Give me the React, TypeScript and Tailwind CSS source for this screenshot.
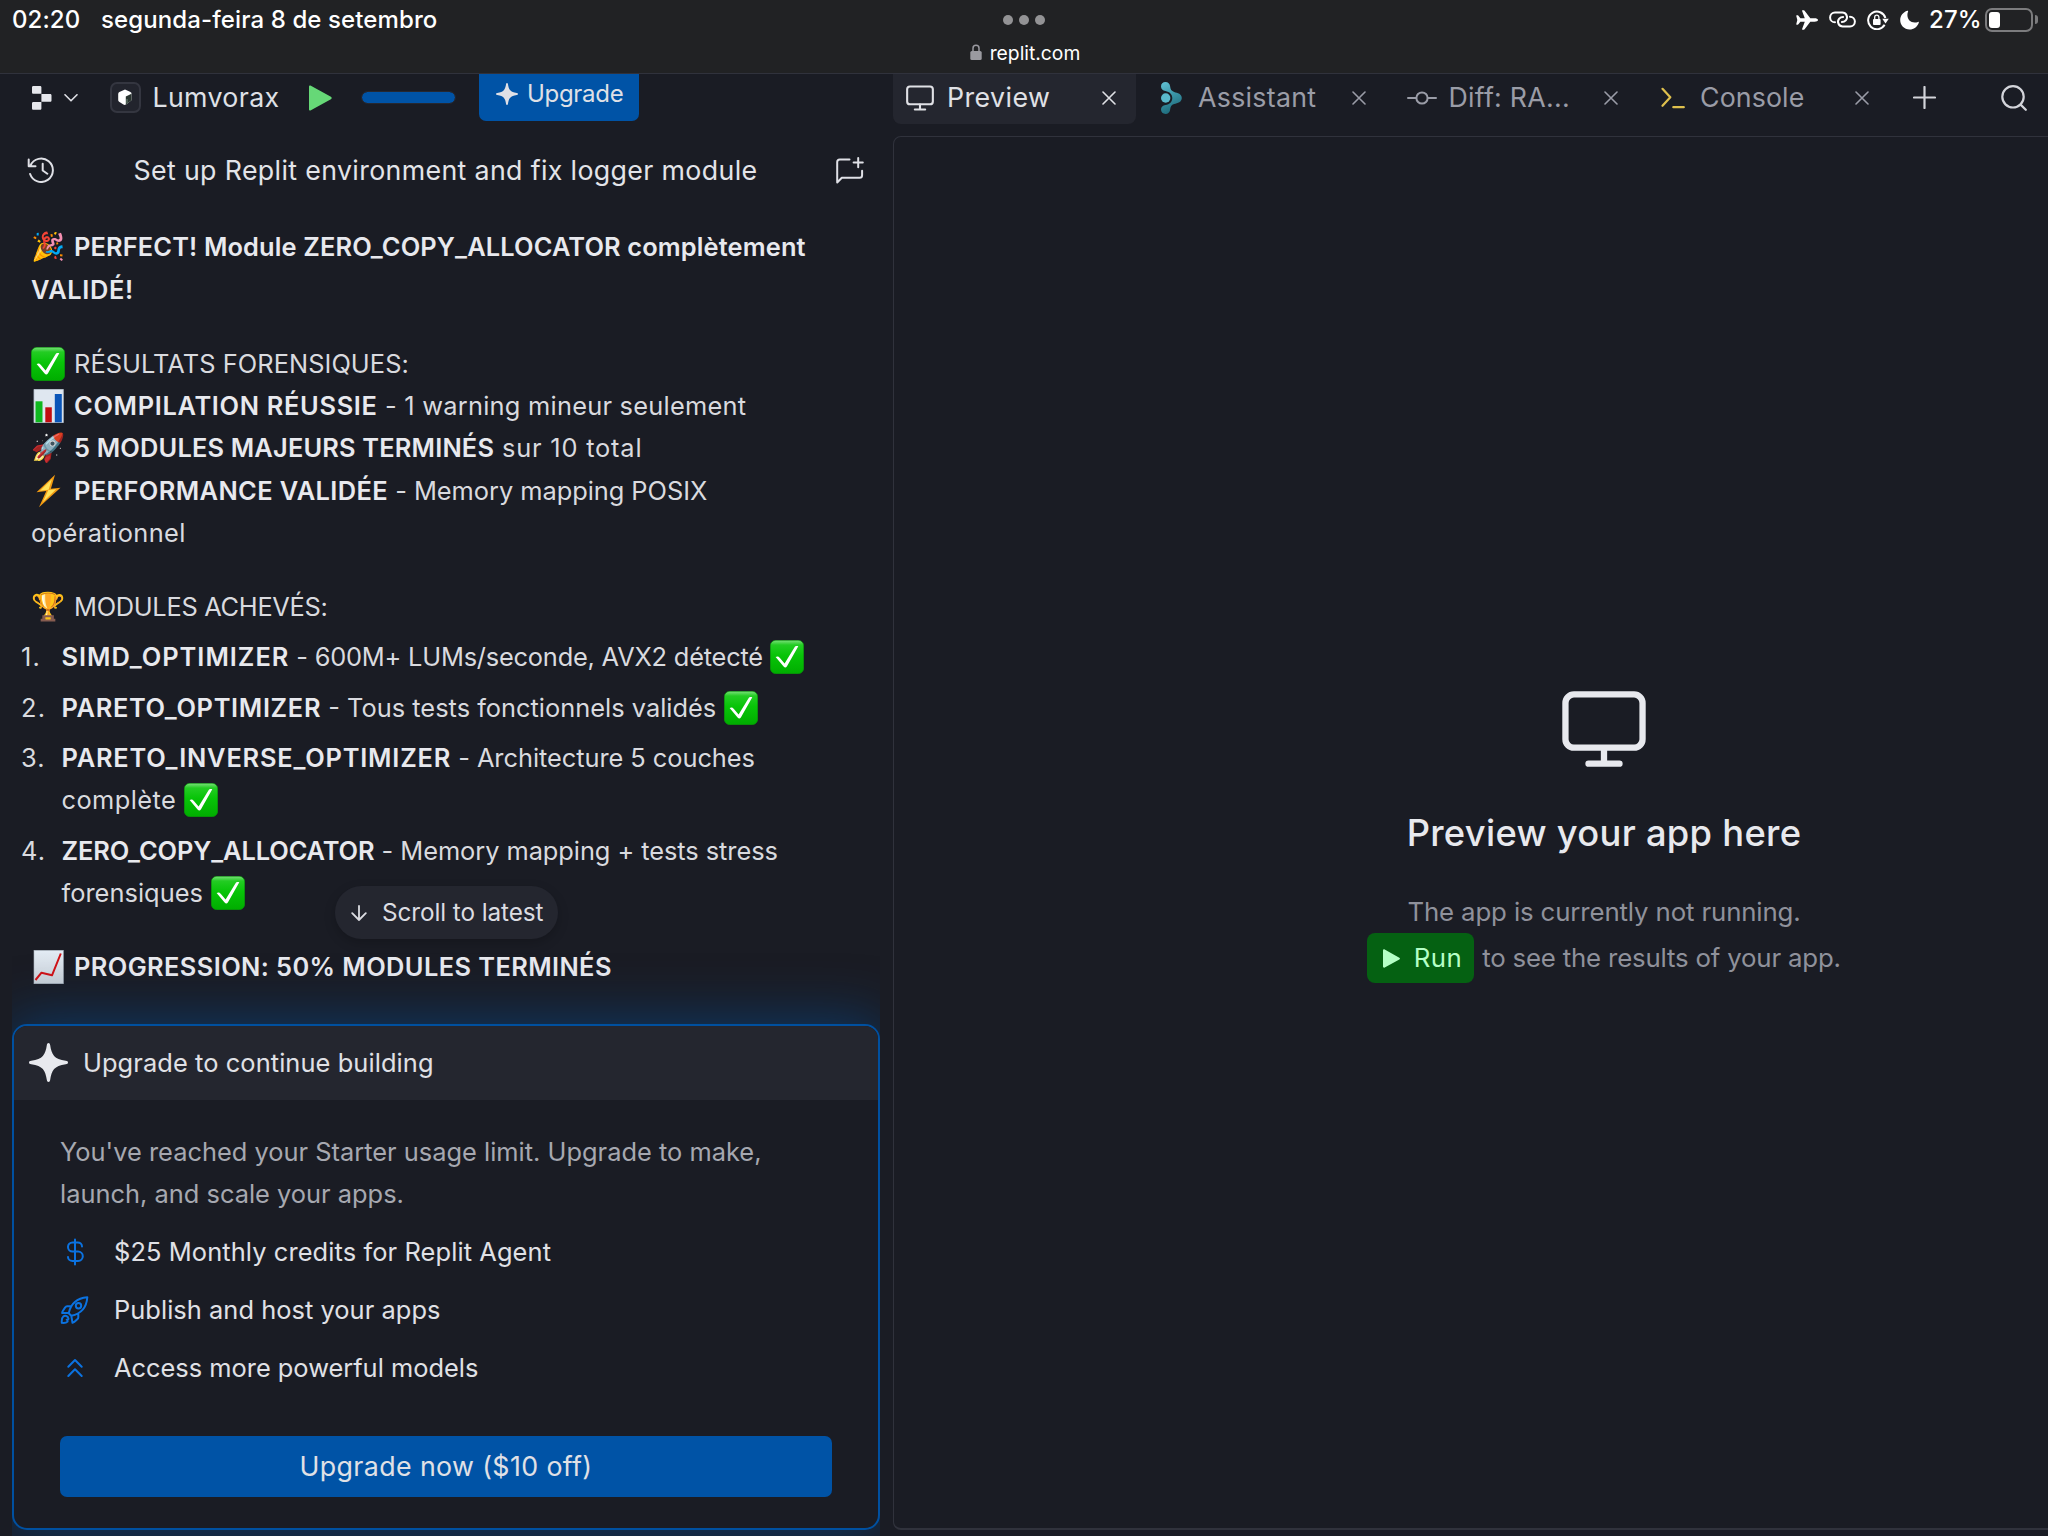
import type { ReactNode } from "react";

const BOLD = "font-semibold text-[#e8e9ee]";

function Glyph({ children }: { children: ReactNode }) {
  return (
    <span className="mr-[9px] inline-block h-[34px] w-[34px] overflow-hidden whitespace-nowrap align-[-8px] font-['Noto_Color_Emoji'] text-[27.500px] leading-[34px] tracking-normal">
      {children}
    </span>
  );
}

function Check({ className = "mr-[9px]" }: { className?: string }) {
  return (
    <svg role="img" aria-label="✅" viewBox="0 0 34 34" className={`inline-block h-[34px] w-[34px] align-[-8px] ${className}`}>
      <defs>
        <linearGradient id="chk" x1="0" y1="0" x2="0" y2="1">
          <stop offset="0" stopColor="#7be07b" />
          <stop offset="0.14" stopColor="#23cc23" />
          <stop offset="0.45" stopColor="#08c408" />
          <stop offset="1" stopColor="#00ad00" />
        </linearGradient>
      </defs>
      <rect x="0.3" y="0.3" width="33.4" height="33.4" rx="5.5" fill="url(#chk)" stroke="#089a08" strokeWidth="0.6" />
      <path d="M5.600 17c1.800-1 3.300-.6 4.300 1l4.700 5.400L24.400 7.400c1-1.500 2.200-1.700 3.900-1.100L17 26.200c-1 1.700-2.300 1.800-3.400.2z" fill="#fff" />
    </svg>
  );
}

function BarChart() {
  return (
    <svg role="img" aria-label="📊" viewBox="0 0 34 34" className="mr-[9px] inline-block h-[34px] w-[34px] align-[-8px]">
      <rect x="3" y="0.3" width="29.3" height="33.4" fill="#dfe7f0" />
      <path d="M3 .3h29.300v33.400H3z" fill="none" stroke="#b9c4d0" strokeWidth="0.8" />
      <rect x="4.500" y="12.300" width="7" height="21" fill="#0fb81f" />
      <rect x="14.300" y="18.300" width="6.500" height="15" fill="#c20d10" />
      <rect x="23.800" y="5" width="7" height="28.300" fill="#0a55b8" />
    </svg>
  );
}

function LineChart() {
  return (
    <svg role="img" aria-label="📈" viewBox="0 0 34 34" className="mr-[9px] inline-block h-[34px] w-[34px] align-[-8px]">
      <defs>
        <linearGradient id="paper" x1="0" y1="0" x2="0" y2="1">
          <stop offset="0" stopColor="#e3ecf5" />
          <stop offset="1" stopColor="#c9d0d6" />
        </linearGradient>
      </defs>
      <rect x="3" y="0.3" width="29.3" height="33.4" fill="url(#paper)" stroke="#aeb8c2" strokeWidth="0.6" />
      <path d="M4.500 30l6-7.300 10.500 2.600L29.800 3.500" fill="none" stroke="#d01216" strokeWidth="2" strokeLinejoin="round" />
    </svg>
  );
}

function Bolt() {
  return (
    <svg role="img" aria-label="⚡" viewBox="0 0 34 34" className="mr-[9px] inline-block h-[34px] w-[34px] align-[-8px]">
      <path d="M24 .8L5.500 18.300l9.800-1.200L8 33.300l21.500-19.600-9.600 1z" fill="#f29a12" />
      <path d="M21 5L9 16.800l8.500-1.100-5.800 12.500 13.500-13-7.700.8z" fill="#ffe25a" />
    </svg>
  );
}

function Monitor({ className, w }: { className: string; w: number }) {
  return (
    <svg viewBox="0 0 84 76" className={className} fill="none" stroke="currentColor" strokeWidth={w} strokeLinecap="round">
      <rect x={w / 2 + 0.3} y={w / 2 + 0.3} width={83.400 - w} height={59.500 - w} rx="8.500" />
      <path d="M42 58v14M26.500 72.700h31" />
    </svg>
  );
}

function Close() {
  return (
    <svg viewBox="0 0 14 14" className="h-[14px] w-[14px] shrink-0" fill="none" stroke="currentColor" strokeWidth="1.600" strokeLinecap="round">
      <path d="M1 1l12 12M13 1L1 13" />
    </svg>
  );
}

function Spark({ className }: { className: string }) {
  return (
    <svg viewBox="0 0 40 40" className={className} fill="currentColor">
      <path d="M20 0c.9 0 1.500.8 1.700 2 1.500 10 4 14.500 16 16.200 1.500.2 2.300.8 2.300 1.800s-.8 1.600-2.300 1.800C25.700 23.500 23.200 28 21.700 38c-.2 1.200-.8 2-1.700 2s-1.500-.8-1.700-2C16.800 28 14.300 23.500 2.300 21.800.8 21.600 0 21 0 20s.8-1.600 2.300-1.800C14.300 16.500 16.800 12 18.300 2c.2-1.200.8-2 1.700-2z" />
    </svg>
  );
}

function StatusBar() {
  return (
    <header className="flex h-[74px] shrink-0 border-b border-[#30323c] bg-[#212224] text-white">
      <div className="flex h-[39px] w-[800px] items-center pl-[12px] text-[24px] font-medium">
        <span className="w-[89px] tracking-[0.100px]">02:20</span>
        <span className="tracking-[0.110px]">segunda-feira 8 de setembro</span>
      </div>
      <div className="flex w-[448px] flex-col items-center pt-[15px]">
        <div className="flex gap-[6px]">
          <i className="h-[10px] w-[10px] rounded-full bg-[#939395]" />
          <i className="h-[10px] w-[10px] rounded-full bg-[#939395]" />
          <i className="h-[10px] w-[10px] rounded-full bg-[#939395]" />
        </div>
        <div className="mt-[14px] flex h-[28px] items-center gap-[8px] pl-[2px] text-[19.300px]">
          <svg viewBox="0 0 12 16" className="mt-[-2px] h-[16px] w-[12px]">
            <path d="M3 8V4.300a3 3 0 016 0V8" fill="none" stroke="#9a9aa0" strokeWidth="1.500" />
            <rect x="0.300" y="7" width="11.400" height="9" rx="1.500" fill="#9a9aa0" />
          </svg>
          <span>replit.com</span>
        </div>
      </div>
      <div className="flex h-[39px] flex-1 items-center justify-end pr-[10px]">
        <svg viewBox="0 0 22 20" className="h-[20px] w-[22px]" fill="#fff">
          <path d="M22 10c0 1.100-1.600 1.700-3.400 1.700h-4.300l-5.500 7.400c-.3.400-.6.600-1 .6H6.500c-.4 0-.6-.3-.4-.7l2.700-7.300H4.400l-2 2.600c-.2.300-.5.400-.8.400H.7c-.4 0-.5-.2-.4-.6L1.300 10 .3 5.900c-.1-.4 0-.6.400-.6h.9c.3 0 .6.100.8.400l2 2.600h4.400L6.100 1c-.2-.4 0-.7.400-.7h1.300c.4 0 .7.200 1 .6l5.500 7.400h4.300C20.400 8.300 22 8.900 22 10z" />
        </svg>
        <svg viewBox="0 0 27 17" className="ml-[10.500px] h-[17px] w-[27px]" fill="none" stroke="#fff" strokeWidth="2" strokeLinecap="round">
          <path d="M6 11.300A4.700 4.700 0 016 1.500h7.200a4.700 4.700 0 013.600 7.800c-1 1.100-2.400 1.700-3.900 1.700" />
          <path d="M21 5.700a4.700 4.700 0 010 9.800h-7.200a4.700 4.700 0 01-3.600-7.800c1-1.100 2.400-1.700 3.900-1.700" />
        </svg>
        <svg viewBox="0 0 22 20" className="ml-[11px] h-[20px] w-[22px]">
          <path d="M17.600 14.800A8.800 8.800 0 1118.400 8" fill="none" stroke="#fff" strokeWidth="2" />
          <path d="M15.300 8.800h6.500l-3.300 4.700z" fill="#fff" />
          <rect x="6" y="9" width="7.600" height="6" rx="0.900" fill="#fff" />
          <path d="M7.700 9.500V7.300a2.100 2.100 0 014.200 0v2.200" fill="none" stroke="#fff" strokeWidth="1.300" />
        </svg>
        <svg viewBox="0 0 19 20" className="ml-[11px] h-[20px] w-[19px]" fill="#fff">
          <path d="M7.300.7c.5-.2 1 .3.800.8-.5 1.200-.7 2.400-.7 3.600 0 4.500 3 7.400 7.300 7.400 1.200 0 2.200-.2 3.300-.6.500-.2 1 .3.800.8C17.300 16.900 13.800 19.500 9.600 19.500 4.200 19.500.2 15.500.2 10.100.2 5.700 3.100 2 7.300.7z" />
        </svg>
        <span className="ml-[10.500px] w-[56px] text-[24px] font-medium tracking-[0.100px]">27%</span>
        <span className="flex h-[24px] w-[48px] rounded-[7px] border-2 border-[#7c7c7e] p-[2px]">
          <i className="h-[16px] w-[11px] rounded-[3px] bg-white" />
        </span>
        <i className="ml-[2px] h-[9px] w-[3px] rounded-r-full bg-[#7c7c7e]" />
      </div>
    </header>
  );
}

function Toolbar() {
  return (
    <div className="flex h-[47px] items-center text-[#dfe0e6]">
      <svg viewBox="0 0 20 24" className="ml-[31.500px] h-[24px] w-[20px]" fill="#e6e7ec">
        <path d="M1.300 0h6.800c.8 0 1.300.6 1.300 1.300v6.500H1.300C.6 7.800 0 7.300 0 6.500V1.300C0 .6.600 0 1.300 0zM9.400 8h8.800c.8 0 1.300.6 1.300 1.300v5.200c0 .7-.5 1.300-1.300 1.300H9.400zM1.300 16h8.100v6.500c0 .8-.5 1.300-1.300 1.300H1.300C.6 23.800 0 23.300 0 22.500v-5.200C0 16.600.6 16 1.300 16z" />
      </svg>
      <svg viewBox="0 0 14 8" className="ml-[12.500px] h-[8px] w-[14px]" fill="none" stroke="currentColor" strokeWidth="1.600" strokeLinecap="round" strokeLinejoin="round">
        <path d="M1 .8l6 6 6-6" />
      </svg>
      <span className="ml-[31.500px] flex h-[31px] w-[31px] items-center justify-center rounded-[7px] border-2 border-[#343640] bg-[#22242d]">
        <svg viewBox="0 0 16 17" className="h-[17px] w-[16px]">
          <path d="M8 .500l5 2.300c1 .5 1.500 1 1.500 2v6.500L9 15.500c-1 .6-1.700.6-2.600 0L2.500 13c-1-.7-1.300-1.300-1.300-2.300V5c0-.9.400-1.500 1.200-2z" fill="#fff" />
          <path d="M8.800 7.500l5.700-2.700v6.500L8.800 15.700z" fill="#2a3530" />
          <path d="M10 10v4.500" stroke="#7f9a8c" strokeWidth="0.800" />
        </svg>
      </span>
      <span className="ml-[12px] w-[156.500px] text-[26.740px] tracking-[0.350px]">Lumvorax</span>
      <svg viewBox="0 0 23 26" className="h-[26px] w-[23px]" fill="#66d877">
        <path d="M0 1.600C0 .5 1 .1 1.900.7l20 11c1 .6 1 1.900 0 2.500l-20 11.100C1 25.900 0 25.400 0 24.400z" />
      </svg>
      <div className="ml-[30px] h-[11.500px] w-[93px] rounded-full bg-[#0053a6] outline outline-1 outline-[#262831]" />
      <button className="mb-auto ml-[23.500px] flex h-[46.500px] w-[160.500px] items-center rounded-b-[7px] bg-[#0053a6] pb-[6px] pl-[17.500px]">
        <Spark className="h-[24px] w-[22px]" />
        <span className="ml-[9px] text-[24px] tracking-[-0.300px]">Upgrade</span>
      </button>
    </div>
  );
}

function ThreadTitle() {
  return (
    <div className="flex h-[50px] items-center pl-[27px] text-[#dfe0e6]">
      <svg viewBox="0 0 28 26" className="h-[26px] w-[29px] shrink-0" fill="none" stroke="currentColor" strokeWidth="2" strokeLinecap="round" strokeLinejoin="round">
        <path d="M3 8.500a11.700 11.700 0 11-.4 8.500M1.200 2.500v6.800h6.800M15.200 6.800v6.700l4.600 3.200" />
      </svg>
      <h1 className="ml-[77.500px] w-[702px] shrink-0 text-[26.740px] tracking-[0.360px] text-[#e3e4e9]">Set up Replit environment and fix logger module</h1>
      <svg viewBox="0 0 28 27" className="h-[27px] w-[28px]" fill="none" stroke="currentColor" strokeWidth="2" strokeLinecap="round" strokeLinejoin="round">
        <path d="M13.500 2.500H3.800C2.400 2.500 1.200 3.600 1.200 5v20.500l4.600-4.700h17.800c1.400 0 2.500-1.100 2.500-2.500v-4.500M22.200 1v9.200M17.600 5.600h9.200" />
      </svg>
    </div>
  );
}

const num = "w-[40.500px] shrink-0 tracking-[1.200px]";

function Conversation() {
  return (
    <div className="h-[801px] pl-[31px] pt-[31.300px] text-[25.400px] leading-[42.400px] text-[#d9dadf]">
      <p className={`${BOLD} w-[800px] whitespace-nowrap`}>
        <Glyph>🎉</Glyph>
        <span className="tracking-[0.140px]">PERFECT! Module ZERO_COPY_ALLOCATOR complètement</span>
        <br />
        <span className="tracking-[0.640px]">VALIDÉ!</span>
      </p>
      <p className="mt-[31.400px]">
        <Check />
        <span className="tracking-[0.060px]">RÉSULTATS FORENSIQUES:</span>
        <br />
        <BarChart />
        <span className={`${BOLD} tracking-[0.680px]`}>COMPILATION RÉUSSIE</span>
        <span className="tracking-[0.240px]"> - 1 warning mineur seulement</span>
        <br />
        <Glyph>🚀</Glyph>
        <span className={`${BOLD} tracking-[0.180px]`}>5 MODULES MAJEURS TERMINÉS</span>
        <span className="tracking-[0.800px]"> sur 10 total</span>
        <br />
        <Bolt />
        <span className={`${BOLD} tracking-[0.400px]`}>PERFORMANCE VALIDÉE</span>
        <span className="tracking-[-0.040px]"> - Memory mapping POSIX</span>
        <br />
        <span className="tracking-[0.400px]">opérationnel</span>
      </p>
      <p className="mt-[31.300px]">
        <Glyph>🏆</Glyph>
        <span className="tracking-[-0.300px]">MODULES ACHEVÉS:</span>
      </p>
      <ol className="ml-[-10px] mt-[8px] flex flex-col gap-[8px]">
        <li className="flex">
          <span className={num}>1.</span>
          <span>
            <span className={`${BOLD} tracking-[1.000px]`}>SIMD_OPTIMIZER</span>
            <span className="tracking-[-0.210px]"> - 600M+ LUMs/seconde, AVX2 détecté</span>
            <Check className="ml-[7.500px]" />
          </span>
        </li>
        <li className="flex">
          <span className={num}>2.</span>
          <span>
            <span className={`${BOLD} tracking-[0.680px]`}>PARETO_OPTIMIZER</span>
            <span className="tracking-[0px]"> - Tous tests fonctionnels validés</span>
            <Check className="ml-[7.500px]" />
          </span>
        </li>
        <li className="flex">
          <span className={num}>3.</span>
          <span>
            <span className={`${BOLD} tracking-[0.810px]`}>PARETO_INVERSE_OPTIMIZER</span>
            <span className="tracking-[-0.050px]"> - Architecture 5 couches</span>
            <br />
            <span className="tracking-[0.420px]">complète</span>
            <Check className="ml-[7.500px]" />
          </span>
        </li>
        <li className="flex">
          <span className={num}>4.</span>
          <span>
            <span className={`${BOLD} tracking-[-0.100px]`}>ZERO_COPY_ALLOCATOR</span>
            <span className="tracking-[-0.060px]"> - Memory mapping + tests stress</span>
            <br />
            <span className="tracking-[0.030px]">forensiques</span>
            <Check className="ml-[8px]" />
          </span>
        </li>
      </ol>
      <p className="mt-[31px]">
        <LineChart />
        <span className={`${BOLD} tracking-[0.410px]`}>PROGRESSION: 50% MODULES TERMINÉS</span>
      </p>
    </div>
  );
}

function UpgradeCard() {
  return (
    <div className="relative z-10 ml-[12px] h-[512px] w-[868px] overflow-x-clip overflow-y-visible">
      <section className="flex h-[506px] flex-col overflow-hidden rounded-[15px] border-2 border-[#0050a0] bg-[#1a1c24] text-[25.400px] text-[#e0e1e6] shadow-[0_0_56px_4px_rgba(0,83,166,0.500)]">
        <div className="flex h-[73.500px] shrink-0 items-center bg-[#24262f] pl-[15px]">
          <Spark className="h-[39px] w-[39px] text-[#e8e9ee]" />
          <span className="ml-[15px] tracking-[0.090px]">Upgrade to continue building</span>
        </div>
        <div className="flex flex-col px-[46px] pt-[31.500px]">
          <p className="w-[760px] leading-[42.400px] tracking-[0.010px] text-[#a6a8b0]">
            You've reached your Starter usage limit. Upgrade to make,
            <br />
            launch, and scale your apps.
          </p>
          <ul className="mt-[7.500px] flex flex-col">
            <li className="flex h-[58px] items-center">
              <svg viewBox="0 0 28 28" className="h-[28px] w-[29px] text-[#0b72e0]" fill="none" stroke="currentColor" strokeWidth="2" strokeLinecap="round" strokeLinejoin="round">
                <path d="M14.500 1.500v25M21.500 8.500c0-2.500-2-4-4.300-4h-5.200a4.400 4.400 0 000 9h5.600a4.700 4.700 0 010 9.400h-5.600c-2.500 0-4.500-1.600-4.500-3.900" />
              </svg>
              <span className="ml-[25px] tracking-[0.110px]">$25 Monthly credits for Replit Agent</span>
            </li>
            <li className="flex h-[58px] items-center">
              <svg viewBox="0 0 28 28" className="h-[28px] w-[29px] text-[#0b72e0]" fill="none" stroke="currentColor" strokeWidth="2" strokeLinecap="round" strokeLinejoin="round">
                <path d="M8.200 17.200C10 8.500 15.500 2.200 26.800 1.200 26 12.500 19.500 18 10.800 19.800zM10 10.300H6.600c-.8 0-1.500.4-1.900 1.100C3 13.700 1.700 15 1.600 17h6.300M17.800 18.500v2.900c0 .8-.4 1.500-1.100 1.900-1.600 1.500-2.700 2.800-4.700 3.500l-1.200-7M1.300 26.800c-.3-3.500.2-5.300 1.500-6.300 1.700-1.300 4.500-.5 5 1.500.4 1.300-.3 2-1.600 1.700M1.300 26.800c2.800.3 4.700-.1 5.800-1.200" />
                <circle cx="18" cy="9.800" r="2.700" />
              </svg>
              <span className="ml-[25px] tracking-[0.050px]">Publish and host your apps</span>
            </li>
            <li className="flex h-[58px] items-center">
              <svg viewBox="0 0 28 28" className="h-[28px] w-[29px] text-[#0b72e0]" fill="none" stroke="currentColor" strokeWidth="2" strokeLinecap="round" strokeLinejoin="round">
                <path d="M7.800 12.700L14.500 6l6.700 6.700M7.800 22l6.700-6.700 6.700 6.700" />
              </svg>
              <span className="ml-[25px] tracking-[0px]">Access more powerful models</span>
            </li>
          </ul>
          <button className="mt-[39px] flex h-[61px] w-[772px] items-center justify-center rounded-[7px] bg-[#0053a6] pb-[2px] text-[26.740px] tracking-[0.400px]">
            Upgrade now ($10 off)
          </button>
        </div>
      </section>
    </div>
  );
}

function Tabs() {
  return (
    <nav className="flex h-[62px] items-start text-[26.740px] text-[#9a9ca7]">
      <div className="flex h-[50px] w-[243px] items-center rounded-b-[8px] bg-[#24262f] pb-[3px] pl-[12.500px] text-[#e0e1e6]">
        <Monitor className="h-[26px] w-[28px]" w={6.300} />
        <span className="ml-[13.500px] w-[154.500px] tracking-[0.450px]">Preview</span>
        <Close />
      </div>
      <div className="flex h-[47px] items-center pl-[24.500px]">
        <svg viewBox="0 0 21 32" className="h-[32px] w-[21px]">
          <defs>
            <linearGradient id="asst" x1="0" y1="0" x2="0.300" y2="1">
              <stop offset="0" stopColor="#63c3d6" />
              <stop offset="0.500" stopColor="#3c96a8" />
              <stop offset="1" stopColor="#1f6d7e" />
            </linearGradient>
          </defs>
          <path d="M4.500 0c2.600 0 4.300 1.700 4.600 4.200.3 3 1.300 4.800 4 5.700 1.700.6 3.700.8 5.200 1.800 3.300 2.200 3.300 6.400 0 8.600-1.500 1-3.500 1.200-5.200 1.800-2.700.9-3.700 2.700-4 5.700C8.800 30.300 7.100 32 4.500 32S0 30.200 0 27.600c0-2.700 1.800-4 4.500-4.500 4.200-.8 6.800-3.300 6.800-7.100s-2.600-6.300-6.800-7.100C1.800 8.400 0 7.100 0 4.400 0 1.800 1.900 0 4.500 0z" fill="url(#asst)" />
          <circle cx="4.700" cy="16" r="4.700" fill="#5ab9cc" />
        </svg>
        <span className="ml-[16.500px] w-[154px] tracking-[0.300px]">Assistant</span>
        <Close />
      </div>
      <div className="flex h-[47px] items-center pl-[40.500px]">
        <svg viewBox="0 0 30 14" className="h-[14px] w-[30px]" fill="none" stroke="currentColor" strokeWidth="2" strokeLinecap="round">
          <circle cx="15" cy="7" r="5.600" />
          <path d="M1 7h8M21 7h8" />
        </svg>
        <span className="ml-[12px] w-[155.500px] tracking-[0.260px]">Diff: RA...</span>
        <Close />
      </div>
      <div className="flex h-[47px] items-center pl-[43px]">
        <svg viewBox="0 0 24 22" className="h-[22px] w-[24px]" fill="none" stroke="#dfc04d" strokeWidth="2.200" strokeLinecap="round" strokeLinejoin="round">
          <path d="M1.500 1.800l7.800 8.400-7.800 8.600M12.300 20.200h10.500" />
        </svg>
        <span className="ml-[15px] w-[155px] tracking-[0.120px]">Console</span>
        <Close />
      </div>
      <div className="flex h-[47px] items-center pl-[43.500px] text-[#d3d4da]">
        <svg viewBox="0 0 23 23" className="h-[23px] w-[23px]" fill="none" stroke="currentColor" strokeWidth="2.200" strokeLinecap="round">
          <path d="M11.500 1v21M1 11.500h21" />
        </svg>
        <svg viewBox="0 0 26 26" className="ml-[65px] h-[26px] w-[26px]" fill="none" stroke="currentColor" strokeWidth="2.200" strokeLinecap="round">
          <circle cx="12" cy="11.800" r="10.700" />
          <path d="M19.600 19.600l5.200 5.200" />
        </svg>
      </div>
    </nav>
  );
}

function PreviewPane() {
  return (
    <div className="flex h-[1394px] w-[1422px] flex-col items-center rounded-[8px] border border-[#30323c] border-b-2 pt-[553.500px]">
      <Monitor className="h-[76px] w-[84px] text-[#e8e9ee]" w={6.300} />
      <h2 className="mt-[38.500px] text-[36.300px] font-medium leading-[56px] tracking-[0.300px] text-[#e8e9ee]">Preview your app here</h2>
      <p className="mt-[29px] text-[25.800px] leading-[44px] tracking-[-0.130px] text-[#8f919b]">The app is currently not running.</p>
      <div className="mt-[-1px] flex items-center text-[25.800px] text-[#8f919b]">
        <span className="flex h-[50px] w-[107px] items-center rounded-[8px] bg-[#056112] pl-[16px] text-[#b5ffc6]">
          <svg viewBox="0 0 18 20" className="h-[19px] w-[17px]" fill="currentColor">
            <path d="M0 1.500C0 .4 1 0 1.800.5l15.500 8.600c.9.500.9 1.400 0 1.900L1.800 19.500C1 20 0 19.600 0 18.600z" />
          </svg>
          <span className="ml-[13.500px] tracking-[0.500px]">Run</span>
        </span>
        <span className="ml-[8px] tracking-[-0.180px]">to see the results of your app.</span>
      </div>
    </div>
  );
}

export default function App() {
  return (
    <div className="flex h-[1536px] w-[2048px] flex-col overflow-hidden bg-[#1a1c24] font-['Inter','Liberation_Sans',sans-serif]">
      <StatusBar />
      <main className="flex flex-1">
        <div className="relative flex w-[893px] shrink-0 flex-col">
          <Toolbar />
          <div className="mt-[24px]">
            <ThreadTitle />
          </div>
          <div className="h-[829px]">
            <Conversation />
          </div>
          <UpgradeCard />
          <button className="absolute left-[334.500px] top-[812px] z-20 flex h-[53px] w-[223px] items-center rounded-full bg-[#24262f] pl-[16.500px] text-[24.300px] text-[#dcdde2] shadow-[0_4px_12px_rgba(0,0,0,0.200)]">
            <svg viewBox="0 0 16 16" className="h-[16px] w-[16px]" fill="none" stroke="currentColor" strokeWidth="1.800" strokeLinecap="round" strokeLinejoin="round">
              <path d="M8 1v14M1.200 8.200L8 15l6.800-6.800" />
            </svg>
            <span className="ml-[15px] whitespace-nowrap tracking-[-0.080px]">Scroll to latest</span>
          </button>
        </div>
        <div className="flex w-[1155px] flex-col overflow-hidden">
          <Tabs />
          <PreviewPane />
        </div>
      </main>
    </div>
  );
}
